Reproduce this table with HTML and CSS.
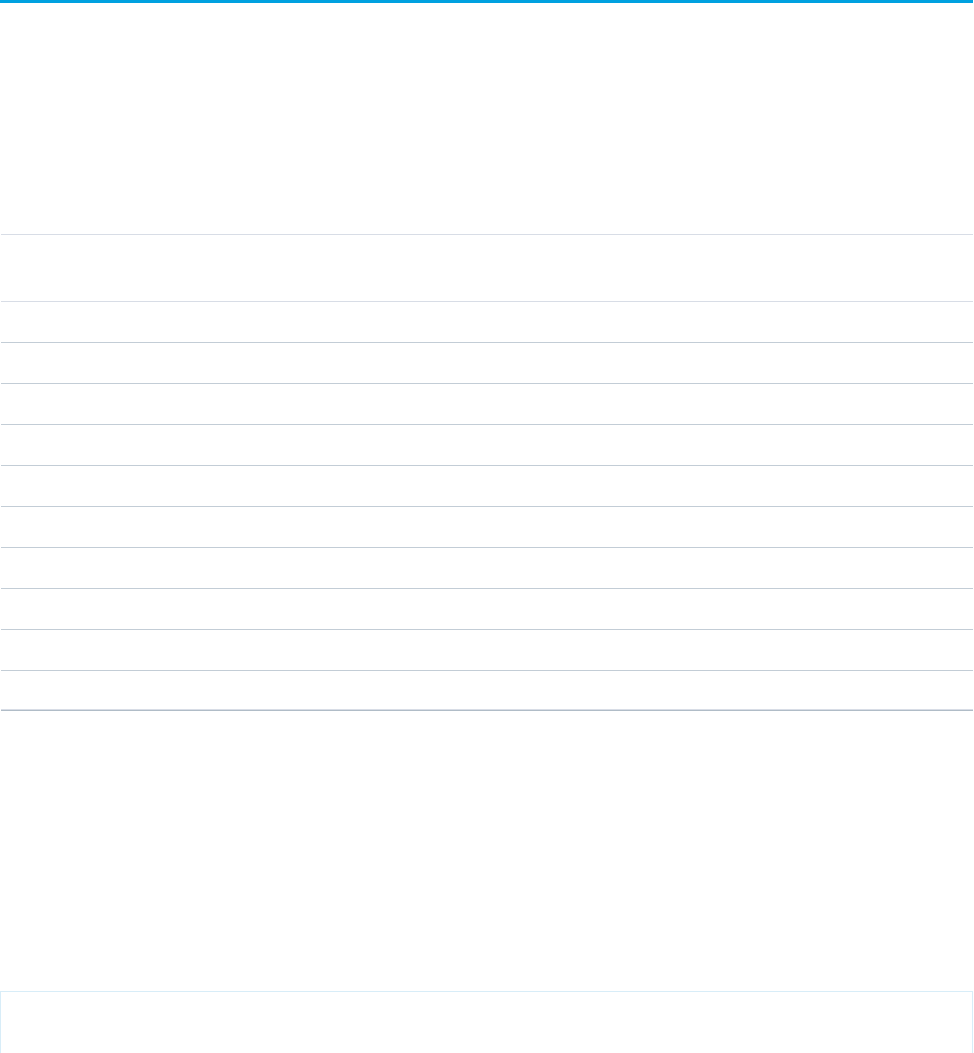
FILE: index.html
```html
<!DOCTYPE html>
<html lang="en">
  <head>
    <meta charset="UTF-8" />
    <title>Records</title>
    <link rel="stylesheet" href="styles.css">
  </head>
  <body>
    <div class="page">
      <div class="top-bar"></div>
      <div class="page-header"></div>
      <div class="list">
        <div class="list-head"></div>
        <div class="list-row"></div>
        <div class="list-row"></div>
        <div class="list-row"></div>
        <div class="list-row"></div>
        <div class="list-row"></div>
        <div class="list-row"></div>
        <div class="list-row"></div>
        <div class="list-row"></div>
        <div class="list-row"></div>
        <div class="list-row last"></div>
      </div>
      <div class="panel"></div>
    </div>
  </body>
</html>
```

FILE: styles.css
```css
body {
  margin: 0;
  font-family: "Liberation Sans", Arial, sans-serif;
  background-color: #fff;
  overflow: hidden;
}

.page {
  width: 974px;
}

.top-bar {
  width: 973px;
  height: 3px;
  background-color: #00a1e0;
}

.page-header {
  height: 231px;
}

.list {
  margin-left: 1px;
  width: 972px;
  border-top: 1px solid #d8dde6;
}

.list-head {
  height: 66px;
  border-bottom: 1px solid #d8dde6;
}

.list-row {
  height: 40px;
  border-bottom: 1px solid #c3cdd6;
}

.list-row.last {
  height: 39px;
  border-bottom: 1px solid #b0bcc7;
  box-shadow: inset 0 -1px 0 #d8dde6;
}

.panel {
  margin-top: 280px;
  width: 971px;
  height: 120px;
  border: 1px solid #d8edf8;
}
```
